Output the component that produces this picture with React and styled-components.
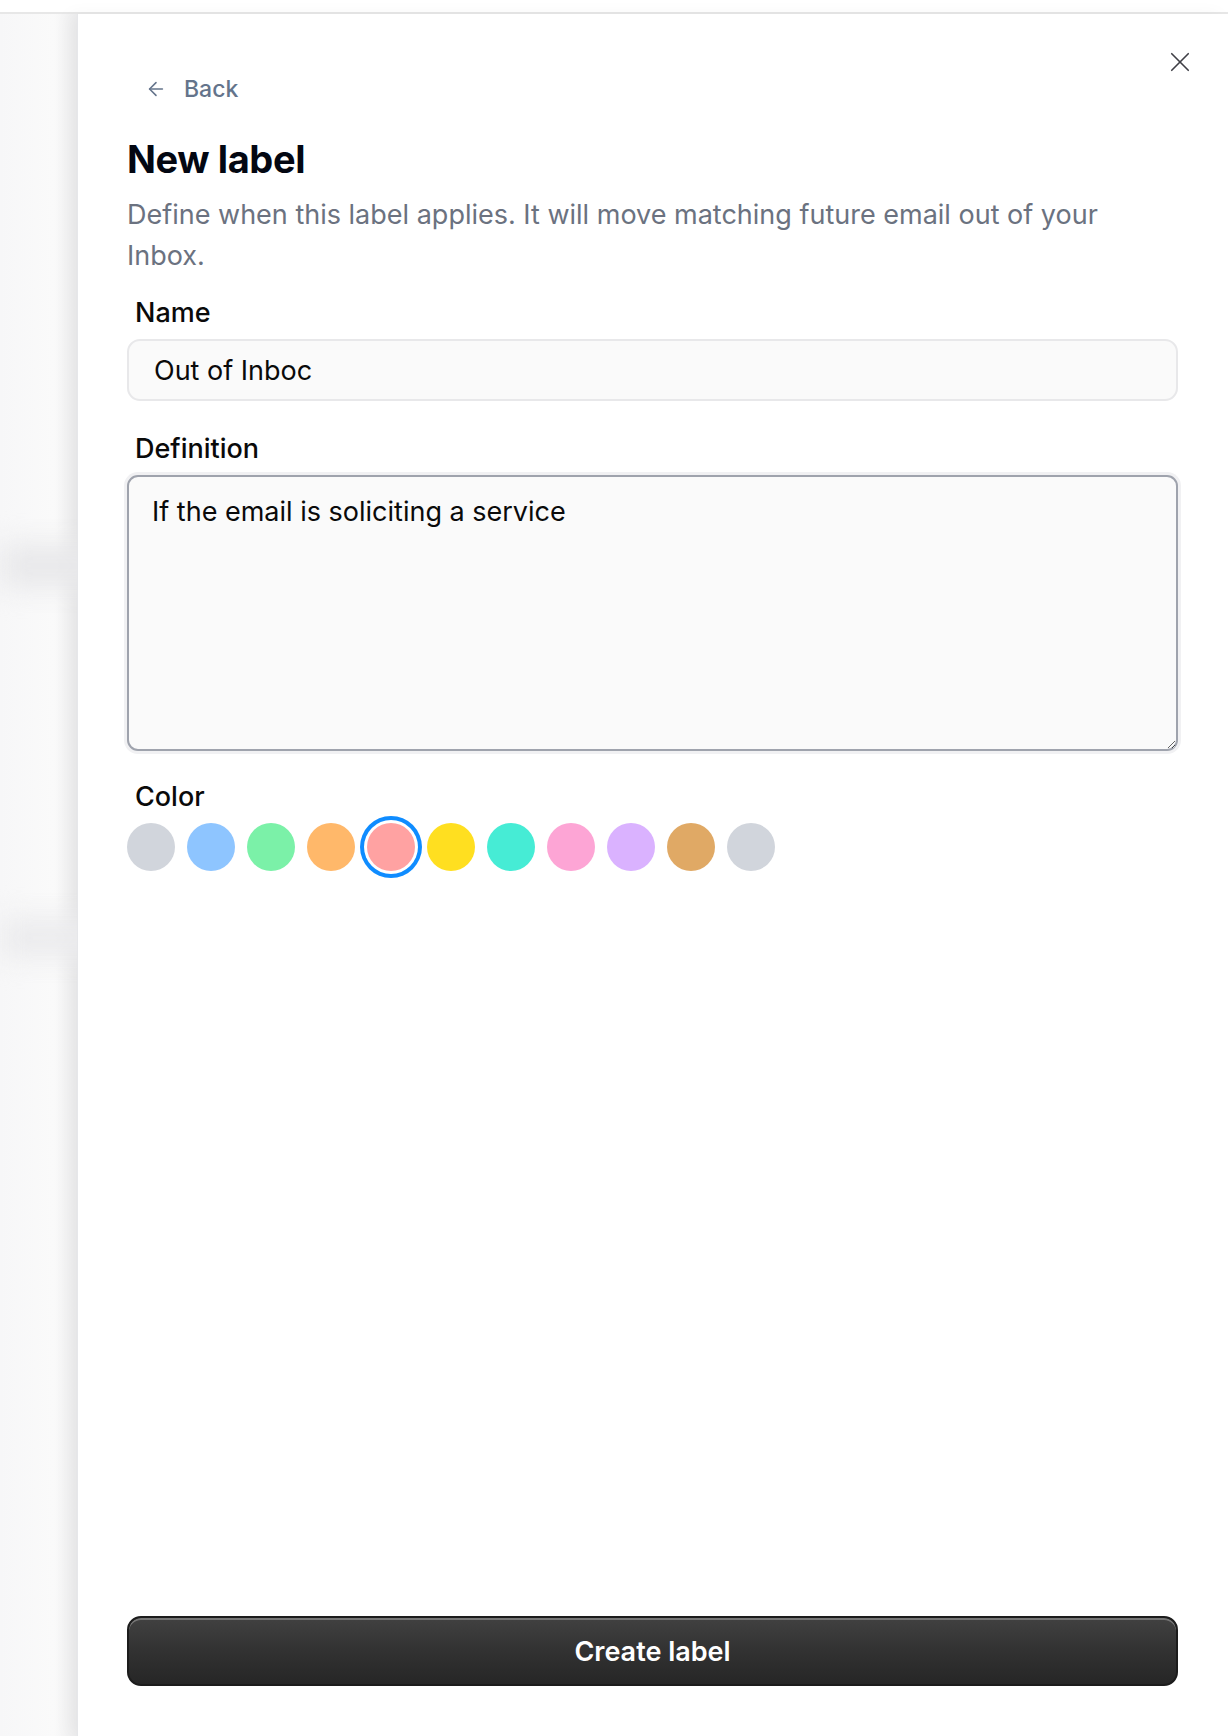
import styled, { createGlobalStyle } from "styled-components";

const GlobalStyle = createGlobalStyle`
  html, body {
    margin: 0;
    padding: 0;
    background: #ffffff;
    font-family: Inter, "Noto Sans", "Liberation Sans", sans-serif;
  }
  * {
    box-sizing: border-box;
  }
`;

const Page = styled.div`
  display: flex;
  flex-direction: column;
  min-height: 1736px;
`;

const TopStrip = styled.div`
  height: 14px;
  background: #ffffff;
  border-bottom: 2px solid #e7e7e7;
`;

const Body = styled.div`
  flex: 1;
  display: flex;
`;

const Backdrop = styled.div`
  width: 77px;
  flex-shrink: 0;
  display: flex;
  flex-direction: column;
  padding-top: 60px;
  background: linear-gradient(to right, #f7f7f8 0%, #fafafa 70%, #eeeeef 100%);
  overflow: hidden;
`;

const BlurBar = styled.div`
  height: ${(p) => p.h}px;
  width: ${(p) => p.w}px;
  margin-top: ${(p) => p.top || 0}px;
  background: ${(p) => p.color};
  filter: blur(14px);
`;

const Panel = styled.div`
  flex: 1;
  display: flex;
  flex-direction: column;
  border-left: 1px solid #e6e7ea;
  box-shadow: -8px 0 16px rgba(0, 0, 0, 0.04);
  padding: 28px 50px 50px 49px;
  background: #ffffff;
`;

const TopRow = styled.div`
  display: flex;
  align-items: center;
  justify-content: space-between;
  margin-top: 25px;
  margin-right: -22px;
`;

const BackButton = styled.button`
  display: flex;
  align-items: center;
  gap: 17px;
  border: none;
  background: none;
  padding: 8px 20px 8px 18px;
  font-family: inherit;
  font-size: 23px;
  font-weight: 500;
  color: #64748b;
  cursor: pointer;
`;

const CloseButton = styled.button`
  display: flex;
  align-items: center;
  justify-content: center;
  width: 40px;
  height: 40px;
  margin-top: -55px;
  border: none;
  background: none;
  padding: 0;
  color: #3f3f46;
  cursor: pointer;
`;

const Title = styled.h1`
  margin: 26px 0 0 0;
  font-size: 38px;
  line-height: 44px;
  font-weight: 700;
  color: #030712;
  letter-spacing: -0.4px;
`;

const Description = styled.p`
  margin: 13px 0 0 0;
  max-width: 1020px;
  font-size: 27px;
  line-height: 41px;
  color: #6b7280;
`;

const Field = styled.div`
  display: flex;
  flex-direction: column;
  margin-top: ${(p) => p.top}px;
`;

const Label = styled.label`
  padding-left: 8px;
  font-size: 27px;
  line-height: 32px;
  font-weight: 500;
  color: #0a0a0a;
  margin-bottom: ${(p) => p.gap}px;
`;

const TextInput = styled.input`
  height: 62px;
  width: 100%;
  padding: 0 25px;
  border: 2px solid #e8e8ea;
  border-radius: 13px;
  background: #fafafa;
  font-family: inherit;
  font-size: 27px;
  color: #0a0a0a;
  outline: none;
`;

const TextArea = styled.textarea`
  height: 276px;
  width: 100%;
  padding: 18px 23px;
  border: 2px solid #9fa3ad;
  border-radius: 11px;
  background: #fafafa;
  box-shadow: 0 0 0 3px #f1f1f3;
  font-family: inherit;
  font-size: 27px;
  line-height: 34px;
  color: #0a0a0a;
  resize: vertical;
  outline: none;
`;

const Swatches = styled.div`
  display: flex;
  gap: 12px;
`;

const Swatch = styled.button`
  width: 48px;
  height: 48px;
  border-radius: 50%;
  border: none;
  padding: 0;
  background: ${(p) => p.color};
  box-shadow: ${(p) =>
    p.selected ? "0 0 0 3px #ffffff, 0 0 0 7px #0f8cff" : "none"};
  cursor: pointer;
`;

const Spacer = styled.div`
  flex: 1;
`;

const SubmitButton = styled.button`
  height: 70px;
  width: 100%;
  border: 2px solid #1c1c1c;
  border-radius: 14px;
  background: linear-gradient(to bottom, #414141 0%, #333333 45%, #262626 100%);
  box-shadow: inset 0 2px 0 rgba(255, 255, 255, 0.28);
  font-family: inherit;
  font-size: 27px;
  font-weight: 600;
  color: #ffffff;
  cursor: pointer;
`;

const colors = [
  "#d1d5dc",
  "#8ec5ff",
  "#7bf1a8",
  "#ffb86a",
  "#ffa2a2",
  "#ffdf20",
  "#46ecd5",
  "#fda5d5",
  "#dab2ff",
  "#e0a965",
  "#d1d5dc",
];

export default function App() {
  return (
    <Page>
      <GlobalStyle />
      <TopStrip />
      <Body>
        <Backdrop>
          <BlurBar h={44} w={110} top={470} color="#e8e8ea" />
          <BlurBar h={40} w={120} top={330} color="#ebebed" />
        </Backdrop>
        <Panel>
          <TopRow>
            <BackButton>
              <svg width="22" height="22" viewBox="0 0 24 24" fill="none" stroke="currentColor" strokeWidth="1.7" strokeLinecap="round" strokeLinejoin="round">
                <path d="M19 12H5" />
                <path d="M12 19l-7-7 7-7" />
              </svg>
              Back
            </BackButton>
            <CloseButton>
              <svg width="22" height="22" viewBox="0 0 24 24" fill="none" stroke="currentColor" strokeWidth="1.8" strokeLinecap="round">
                <path d="M3 3l18 18" />
                <path d="M21 3L3 21" />
              </svg>
            </CloseButton>
          </TopRow>

          <Title>New label</Title>
          <Description>
            Define when this label applies. It will move matching future email
            out of your Inbox.
          </Description>

          <Field top={21}>
            <Label gap={10}>Name</Label>
            <TextInput defaultValue="Out of Inboc" />
          </Field>

          <Field top={32}>
            <Label gap={10}>Definition</Label>
            <TextArea defaultValue="If the email is soliciting a service" />
          </Field>

          <Field top={30}>
            <Label gap={10}>Color</Label>
            <Swatches>
              {colors.map((c, i) => (
                <Swatch key={i} color={c} selected={i === 4} />
              ))}
            </Swatches>
          </Field>

          <Spacer />

          <SubmitButton>Create label</SubmitButton>
        </Panel>
      </Body>
    </Page>
  );
}
